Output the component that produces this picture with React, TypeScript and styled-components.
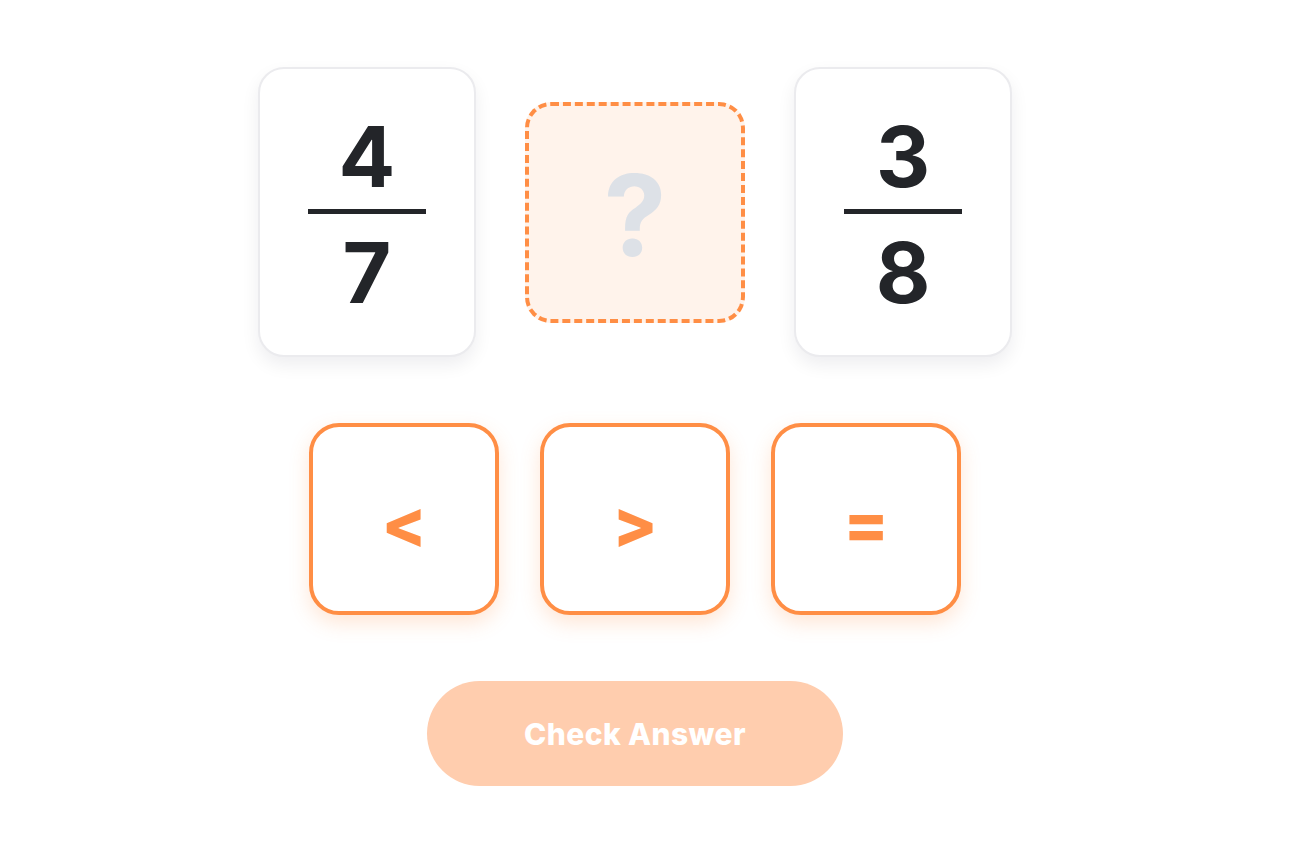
import styled, { createGlobalStyle } from "styled-components";

const GlobalStyle = createGlobalStyle`
  html, body {
    margin: 0;
    padding: 0;
    background: #ffffff;
    font-family: Inter, "Noto Sans", sans-serif;
  }
`;

const Page = styled.div`
  width: 1270px;
  padding-top: 67px;
  display: flex;
  flex-direction: column;
  align-items: center;
  gap: 66px;
`;

const CompareRow = styled.div`
  display: flex;
  align-items: center;
  gap: 49px;
`;

const FractionCard = styled.div`
  width: 214px;
  height: 280px;
  padding-top: 6px;
  box-sizing: content-box;
  border: 2px solid #ebebee;
  border-radius: 26px;
  background: #ffffff;
  box-shadow: 0 8px 18px rgba(20, 20, 40, 0.07);
  display: flex;
  flex-direction: column;
  align-items: center;
  justify-content: center;
`;

const Digit = styled.div`
  font-size: 84px;
  font-weight: 700;
  line-height: 84px;
  color: #232529;
`;

const Bar = styled.div`
  width: 118px;
  height: 5px;
  background: #232529;
  margin: 10px 0 17px;
`;

const Slot = styled.div`
  width: 220px;
  height: 221px;
  box-sizing: border-box;
  border: 4px dashed #ff8e45;
  border-radius: 26px;
  background: #fff3eb;
  display: flex;
  align-items: center;
  justify-content: center;
  padding-top: 6px;
  font-size: 112px;
  font-weight: 700;
  line-height: 1;
  color: #dde1e7;
`;

const OperatorRow = styled.div`
  display: flex;
  gap: 41px;
`;

const OperatorButton = styled.button`
  width: 190px;
  height: 192px;
  box-sizing: border-box;
  border: 4px solid #ff8e45;
  border-radius: 30px;
  background: #ffffff;
  box-shadow: 0 8px 20px rgba(255, 142, 69, 0.22);
  color: #ff8e45;
  font-family: Inter, "Noto Sans", sans-serif;
  font-size: 66px;
  font-weight: 800;
  line-height: 1;
  display: flex;
  align-items: center;
  justify-content: center;
  padding: 8px 0 0 0;
  cursor: pointer;
`;

const CheckButton = styled.button`
  width: 416px;
  height: 105px;
  border: none;
  border-radius: 53px;
  background: #ffcdae;
  color: #ffffff;
  font-family: Inter, "Noto Sans", sans-serif;
  font-size: 30px;
  font-weight: 800;
  letter-spacing: 0.4px;
  cursor: pointer;
`;

const Fraction = ({ top, bottom }: { top: number; bottom: number }) => (
  <FractionCard>
    <Digit>{top}</Digit>
    <Bar />
    <Digit>{bottom}</Digit>
  </FractionCard>
);

export default function App() {
  const operators = ["<", ">", "="];
  return (
    <>
      <GlobalStyle />
      <Page>
        <CompareRow>
          <Fraction top={4} bottom={7} />
          <Slot>?</Slot>
          <Fraction top={3} bottom={8} />
        </CompareRow>
        <OperatorRow>
          {operators.map((op) => (
            <OperatorButton key={op}>{op}</OperatorButton>
          ))}
        </OperatorRow>
        <CheckButton>Check Answer</CheckButton>
      </Page>
    </>
  );
}
